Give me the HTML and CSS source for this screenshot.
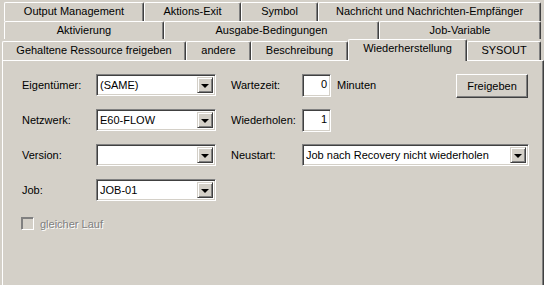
FILE: index.html
```html
<!DOCTYPE html>
<html lang="de">
<head>
    <meta charset="UTF-8">
    <title>Wiederherstellung</title>
    <link rel="stylesheet" href="styles.css">
</head>
<body>
    <div class="dialog">
        <div class="tab-row row-1">
            <div class="tab w-output">Output Management</div>
            <div class="tab w-aktexit">Aktions-Exit</div>
            <div class="tab w-symbol">Symbol</div>
            <div class="tab w-nachricht">Nachricht und Nachrichten-Empfänger</div>
        </div>
        <div class="tab-row row-2">
            <div class="tab w-aktiv">Aktivierung</div>
            <div class="tab w-ausgabe">Ausgabe-Bedingungen</div>
            <div class="tab w-jobvar">Job-Variable</div>
        </div>
        <div class="tab-row row-3">
            <div class="tab w-gehalten">Gehaltene Ressource freigeben</div>
            <div class="tab w-andere">andere</div>
            <div class="tab w-beschr">Beschreibung</div>
            <div class="tab w-wieder active">Wiederherstellung</div>
            <div class="tab w-sysout">SYSOUT</div>
        </div>

        <div class="panel">
            <div class="form">
                <span class="label">Eigentümer:</span>
                <div class="combo"><span class="value">(SAME)</span><span class="drop-btn"><i class="arrow"></i></span></div>
                <span></span>
                <span class="label">Wartezeit:</span>
                <div class="cell-row">
                    <div class="num-input">0</div>
                    <span class="unit">Minuten</span>
                    <button class="btn" type="button">Freigeben</button>
                </div>

                <span class="label">Netzwerk:</span>
                <div class="combo"><span class="value">E60-FLOW</span><span class="drop-btn"><i class="arrow"></i></span></div>
                <span></span>
                <span class="label">Wiederholen:</span>
                <div class="cell-row">
                    <div class="num-input">1</div>
                </div>

                <span class="label">Version:</span>
                <div class="combo"><span class="value"></span><span class="drop-btn"><i class="arrow"></i></span></div>
                <span></span>
                <span class="label">Neustart:</span>
                <div class="combo wide"><span class="value">Job nach Recovery nicht wiederholen</span><span class="drop-btn"><i class="arrow"></i></span></div>

                <span class="label">Job:</span>
                <div class="combo"><span class="value">JOB-01</span><span class="drop-btn"><i class="arrow"></i></span></div>

                <label class="check disabled">
                    <span class="check-box"></span>
                    <span class="check-text">gleicher Lauf</span>
                </label>
            </div>
        </div>
    </div>
</body>
</html>
```

FILE: styles.css
```css
body {
    margin: 0;
    background-color: #d4d0c8;
    font-family: 'Liberation Sans', Arial, sans-serif;
    font-size: 11px;
    color: #000;
    width: 544px;
    height: 285px;
    overflow: hidden;
}

.dialog {
    padding-top: 2px;
}

/* tab strip */
.tab-row {
    display: flex;
    align-items: flex-end;
}

.row-1,
.row-2 {
    margin-left: 4px;
}

.row-3 {
    margin-left: 2px;
}

.tab {
    box-sizing: border-box;
    height: 19px;
    line-height: 17px;
    text-align: center;
    white-space: nowrap;
    background-color: #d4d0c8;
    border-top: 1px solid #fff;
    border-left: 1px solid #fff;
    border-right: 1px solid #404040;
    box-shadow: inset -1px 0 #808080;
    border-top-left-radius: 2px;
    border-top-right-radius: 2px;
}

.row-2 .tab {
    height: 18px;
    line-height: 16px;
}

.tab.active {
    height: 22px;
    line-height: 17px;
    margin-bottom: -1px;
    position: relative;
    z-index: 1;
}

.w-output { width: 140px; }
.w-aktexit { width: 97px; }
.w-symbol { width: 77px; }
.w-nachricht { width: 223px; }

.w-aktiv { width: 160px; }
.w-ausgabe { width: 215px; }
.w-jobvar { width: 162px; }

.w-gehalten { width: 184px; }
.w-andere { width: 65px; }
.w-beschr { width: 97px; }
.w-wieder { width: 119px; }
.w-sysout { width: 74px; }

/* page body */
.panel {
    box-sizing: border-box;
    margin-left: 2px;
    width: 542px;
    height: 227px;
    border-top: 1px solid #fff;
    border-left: 1px solid #fff;
    border-right: 1px solid #404040;
    border-bottom: 1px solid #404040;
    box-shadow: inset -1px -1px #808080;
}

.form {
    display: grid;
    grid-template-columns: 74px 120px 15px 71px 1fr;
    grid-template-rows: 22px 22px 22px 22px auto;
    row-gap: 13px;
    align-items: center;
    padding: 13px 13px 0 19px;
}

.label {
    white-space: nowrap;
}

.combo {
    box-sizing: border-box;
    display: flex;
    align-items: center;
    width: 120px;
    height: 22px;
    padding: 2px 2px 2px 3px;
    background-color: #fff;
    border: 1px solid;
    border-color: #808080 #fff #fff #808080;
    box-shadow: inset 1px 1px #404040, inset -1px -1px #d4d0c8;
}

.combo.wide {
    width: 227px;
}

.combo .value {
    flex: 1;
    white-space: nowrap;
    overflow: hidden;
}

.drop-btn {
    box-sizing: border-box;
    display: flex;
    align-items: center;
    justify-content: center;
    width: 16px;
    height: 16px;
    background-color: #d4d0c8;
    border: 1px solid;
    border-color: #d4d0c8 #404040 #404040 #d4d0c8;
    box-shadow: inset 1px 1px #fff, inset -1px -1px #808080;
}

.arrow {
    width: 0;
    height: 0;
    border-left: 4px solid transparent;
    border-right: 4px solid transparent;
    border-top: 4px solid #000;
    margin-top: 1px;
}

.cell-row {
    display: flex;
    align-items: center;
}

.num-input {
    box-sizing: border-box;
    width: 29px;
    height: 23px;
    line-height: 19px;
    padding-right: 3px;
    text-align: right;
    background-color: #fff;
    border: 1px solid;
    border-color: #808080 #fff #fff #808080;
    box-shadow: inset 1px 1px #404040, inset -1px -1px #d4d0c8;
}

.unit {
    margin-left: 6px;
}

.btn {
    margin-left: auto;
    margin-right: 2px;
    margin-top: 2px;
    width: 72px;
    height: 24px;
    padding: 0;
    font-family: inherit;
    font-size: 11px;
    color: #000;
    background-color: #d4d0c8;
    border: 1px solid;
    border-color: #fff #404040 #404040 #fff;
    box-shadow: inset -1px -1px #808080;
}

.check {
    grid-column: 1 / -1;
    display: flex;
    align-items: center;
    margin-top: 3px;
    margin-left: -1px;
    height: 13px;
}

.check-box {
    box-sizing: border-box;
    width: 13px;
    height: 13px;
    background-color: #d4d0c8;
    border: 1px solid;
    border-color: #808080 #fff #fff #808080;
    box-shadow: inset 1px 1px #808080;
}

.check-text {
    margin-left: 6px;
}

.check.disabled .check-text {
    color: #808080;
    text-shadow: 1px 1px #fff;
}
```
